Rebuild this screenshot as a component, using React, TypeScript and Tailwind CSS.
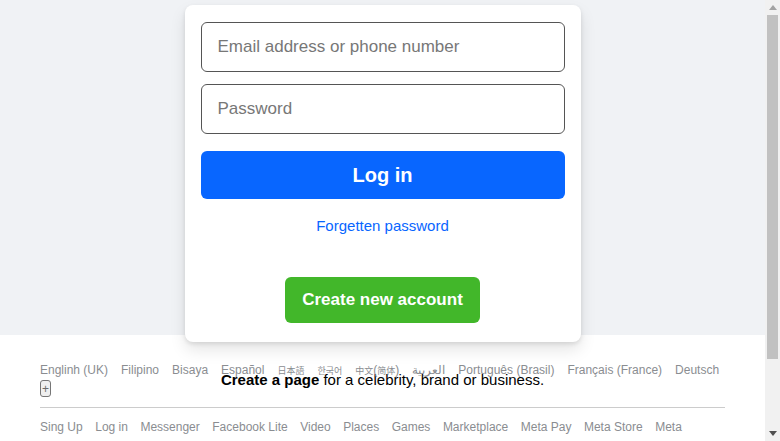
import React from "react";

const cjk = "text-[9px] font-['Noto_Sans_CJK_SC','Noto_Sans_CJK_JP',sans-serif]";

function Lang({ children }: { children: React.ReactNode }) {
  return <a className="leading-[18px] text-[12px] text-[#8a8d91] whitespace-nowrap cursor-pointer">{children}</a>;
}

const links = [
  "Sing Up",
  "Log in",
  "Messenger",
  "Facebook Lite",
  "Video",
  "Places",
  "Games",
  "Marketplace",
  "Meta Pay",
  "Meta Store",
  "Meta",
  "Meta Quest",
  "Ray-Ban Meta",
  "Meta AI",
  "Instagram",
  "Threads",
  "Fundraisers",
  "Services",
  "Voting Information Centre",
  "Privacy Policy",
  "Privacy Centre",
  "Groups",
  "About",
  "Create ad",
  "Create Page",
  "Developers",
  "Careers",
  "Cookies",
  "AdChoices",
  "Terms",
  "Help",
  "Contact uploading and non-users",
];

function Scrollbar() {
  return (
    <aside className="w-[15px] h-[441px] shrink-0 self-start bg-[#f1f1f1] flex flex-col items-center">
      <div className="h-[15px] flex items-center justify-center">
        <svg width="8" height="5" viewBox="0 0 8 5">
          <polygon points="4,0 8,5 0,5" fill="#a3a3a3" />
        </svg>
      </div>
      <div className="w-[11px] h-[344px] bg-[#c1c1c1]" />
      <div className="flex-1" />
      <div className="h-[15px] flex items-center justify-center">
        <svg width="8" height="5" viewBox="0 0 8 5">
          <polygon points="0,0 8,0 4,5" fill="#505050" />
        </svg>
      </div>
    </aside>
  );
}

export default function App() {
  return (
    <div className="flex bg-white font-['Liberation_Sans',Arial,'Noto_Sans_CJK_SC',sans-serif] text-[#1c1e21]">
      <div className="flex-1 min-w-0">
        <main className="h-[335px] bg-[#f0f2f5] flex flex-col items-center pt-[5px]">
          <div className="w-[396px] shrink-0 bg-white rounded-lg shadow-[0_2px_4px_rgba(0,0,0,0.1),0_8px_16px_rgba(0,0,0,0.1)] px-4 pt-[17px] pb-[19px] flex flex-col items-center">
            <input
              type="text"
              placeholder="Email address or phone number"
              className="w-full h-[50px] border border-[#555] rounded-md px-4 text-[17px] placeholder:text-[#777] outline-none"
            />
            <input
              type="password"
              placeholder="Password"
              className="w-full h-[50px] mt-3 border border-[#555] rounded-md px-4 text-[17px] placeholder:text-[#777] outline-none"
            />
            <button className="w-full h-12 mt-[17px] bg-[#0866ff] rounded-md text-white text-[20px] font-bold leading-[24px]">
              Log in
            </button>
            <a className="mt-[18px] text-[15px] leading-[17px] text-[#0866ff] cursor-pointer">Forgetten password</a>
            <button className="mt-[43px] h-[46px] px-4 w-[195px] bg-[#42b72a] rounded-md text-white text-[17px] font-bold leading-[20px]">
              Create new account
            </button>
          </div>
          <p className="mt-7 text-[15px] leading-5 text-black">
            <span className="font-bold">Create a page</span> for a celebrity, brand or business.
          </p>
        </main>
        <footer className="px-10 pt-[26px] pb-[30px]">
          <div className="flex flex-wrap gap-x-[13px] items-start">
            <Lang>Englinh (UK)</Lang>
            <Lang>Filipino</Lang>
            <Lang>Bisaya</Lang>
            <Lang>Español</Lang>
            <Lang>
              <span className={cjk}>日本語</span>
            </Lang>
            <Lang>
              <span className={cjk}>한국어</span>
            </Lang>
            <Lang>
              <span className={cjk}>中文</span>(<span className={cjk}>简体</span>)
            </Lang>
            <Lang>العربية</Lang>
            <Lang>Português (Brasil)</Lang>
            <Lang>Français (France)</Lang>
            <Lang>Deutsch</Lang>
            <button className="h-[17px] w-[11px] border border-[#767676] bg-[#efefef] rounded-[3px] text-[12px] leading-[14px] text-[#6b6b6b] flex items-center justify-center">
              +
            </button>
          </div>
          <div className="h-px bg-[#ccc] mt-[10px] mb-[10px]" />
          <div className="flex flex-wrap gap-x-[12.5px] gap-y-2">
            {links.map((l) => (
              <a key={l} className="leading-[18px] text-[12px] text-[#8a8d91] whitespace-nowrap cursor-pointer">
                {l}
              </a>
            ))}
          </div>
          <p className="mt-5 text-[11px] leading-[14px] text-[#8a8d91]">Meta © 2024</p>
        </footer>
      </div>
      <Scrollbar />
    </div>
  );
}
